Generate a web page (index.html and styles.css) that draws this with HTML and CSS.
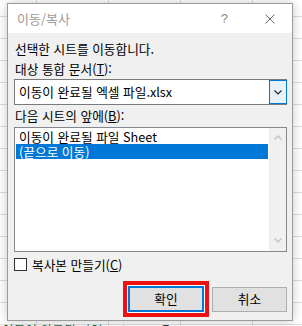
FILE: index.html
```html
<!DOCTYPE html>
<html lang="ko">
<head>
<meta charset="utf-8">
<link rel="stylesheet" href="styles.css">
</head>
<body>
<div class="window">
  <div class="titlebar">
    <span class="title">이동/복사</span>
    <span class="help">?</span>
    <span class="close"><svg width="10" height="10" viewBox="0 0 10 10"><path d="M0.5 0.5L9.5 9.5M9.5 0.5L0.5 9.5" stroke="#6a6a6a" stroke-width="1" fill="none"/></svg></span>
  </div>
  <div class="content">
    <div class="label">선택한 시트를 이동합니다.</div>
    <div class="label">대상 통합 문서(<u>T</u>):</div>
    <div class="combo">
      <span class="combo-text">이동이 완료될 엑셀 파일.xlsx</span>
      <span class="combo-btn"><svg width="8" height="5" viewBox="0 0 8 5"><path d="M0.5 0.5L4 4L7.5 0.5" stroke="#222" stroke-width="1.1" fill="none"/></svg></span>
    </div>
    <div class="label label-tall">다음 시트의 앞에(<u>B</u>):</div>
    <div class="listbox">
      <div class="items">
        <div class="item">이동이 완료될 파일 Sheet</div>
        <div class="item selected">(끝으로 이동)</div>
      </div>
      <div class="scrollbar">
        <svg width="8" height="5" viewBox="0 0 8 5"><path d="M0.5 4.5L4 1L7.5 4.5" stroke="#c2c2c2" stroke-width="1.3" fill="none"/></svg>
        <svg width="8" height="5" viewBox="0 0 8 5"><path d="M0.5 0.5L4 4L7.5 0.5" stroke="#c2c2c2" stroke-width="1.3" fill="none"/></svg>
      </div>
    </div>
    <div class="check"><span class="box"></span><span>복사본 만들기(<u>C</u>)</span></div>
    <div class="buttons">
      <span class="highlight"><span class="btn btn-default">확인</span></span>
      <span class="btn">취소</span>
    </div>
  </div>
</div>
<div class="sheet-below">
  <span class="cell cell-a">이동이 완료될 파일</span>
  <span class="cell cell-b">은</span>
</div>
</body>
</html>
```
FILE: styles.css
```css
html, body {
  margin: 0;
}
body {
  width: 302px;
  height: 326px;
  overflow: hidden;
  box-sizing: border-box;
  padding: 3px 0 0 7px;
  background-color: #ffffff;
  background-image:
    linear-gradient(#dadcdd 1px, transparent 1px),
    linear-gradient(90deg, #dadcdd 1px, transparent 1px);
  background-size: 72px 22px;
  background-position: 36px 16px;
  font-family: "Noto Sans CJK KR", "Noto Sans", sans-serif;
  font-size: 12.7px;
  color: #000;
}
.window {
  width: 286px;
  height: 318px;
  box-sizing: border-box;
  border: 1px solid #9a9a9a;
  background: #f0f0f0;
  box-shadow: 0 0 10px rgba(0, 0, 0, 0.22);
  display: flex;
  flex-direction: column;
}
.titlebar {
  height: 29px;
  background: #ffffff;
  display: flex;
  align-items: center;
  flex: none;
}
.title {
  margin-left: 9px;
  color: #9b9b9b;
  font-size: 13px;
  line-height: 16px;
  flex: 1;
}
.help {
  color: #8a8a8a;
  font-family: "Liberation Sans", sans-serif;
  font-size: 13px;
  line-height: 16px;
  margin-right: 37px;
}
.close {
  display: flex;
  margin-right: 17px;
}
.content {
  flex: 1;
  padding: 6px 5px 0 6px;
  display: flex;
  flex-direction: column;
}
.label {
  height: 20px;
  line-height: 20px;
  padding-left: 1px;
  white-space: nowrap;
}
.label-tall {
  height: 22px;
  line-height: 22px;
}
.combo {
  height: 26px;
  box-sizing: border-box;
  border: 1px solid #7a7a7a;
  background: #fff;
  display: flex;
  align-items: center;
}
.combo-text {
  flex: 1;
  padding-left: 4px;
  line-height: 16px;
  white-space: nowrap;
}
.combo-btn {
  width: 18px;
  height: 24px;
  box-sizing: border-box;
  border: 1px solid #0078d7;
  background: #e5f1fb;
  margin-right: -1px;
  display: flex;
  align-items: center;
  justify-content: center;
}
.listbox {
  height: 125px;
  box-sizing: border-box;
  border: 1px solid #828790;
  background: #fff;
  display: flex;
}
.items {
  flex: 1;
  padding: 1px;
}
.item {
  height: 15px;
  line-height: 15px;
  padding-left: 3px;
  white-space: nowrap;
}
.item.selected {
  background: #0078d7;
  color: #fff;
}
.scrollbar {
  width: 17px;
  background: #f0f0f0;
  display: flex;
  flex-direction: column;
  justify-content: space-between;
  align-items: center;
  padding: 7px 0 8px;
  box-sizing: border-box;
}
.check {
  margin-top: 6px;
  height: 13px;
  display: flex;
  align-items: center;
  gap: 5px;
  line-height: 13px;
  white-space: nowrap;
}
.box {
  width: 13px;
  height: 13px;
  box-sizing: border-box;
  border: 1px solid #333;
  background: #fff;
  flex: none;
}
.buttons {
  margin-top: 10px;
  display: flex;
  justify-content: flex-end;
  align-items: center;
  gap: 3px;
}
.highlight {
  border: 4px solid #ee1111;
  padding: 1px;
  background: #fff;
  display: flex;
}
.btn {
  width: 75px;
  height: 25px;
  box-sizing: border-box;
  border: 1px solid #adadad;
  background: #e1e1e1;
  display: flex;
  align-items: center;
  justify-content: center;
  line-height: 16px;
}
.btn-default {
  width: 76px;
  height: 26px;
  border: 2px solid #0078d7;
}
.sheet-below {
  margin-left: -7px;
  display: flex;
  height: 15px;
  line-height: 15px;
  margin-top: 1px;
}
.cell {
  white-space: nowrap;
  overflow: hidden;
}
.cell-a {
  width: 121px;
  padding-left: 2px;
  color: #1f5f3f;
  border-right: 1px solid #dadcdd;
}
.cell-b {
  padding-left: 36px;
}
```
